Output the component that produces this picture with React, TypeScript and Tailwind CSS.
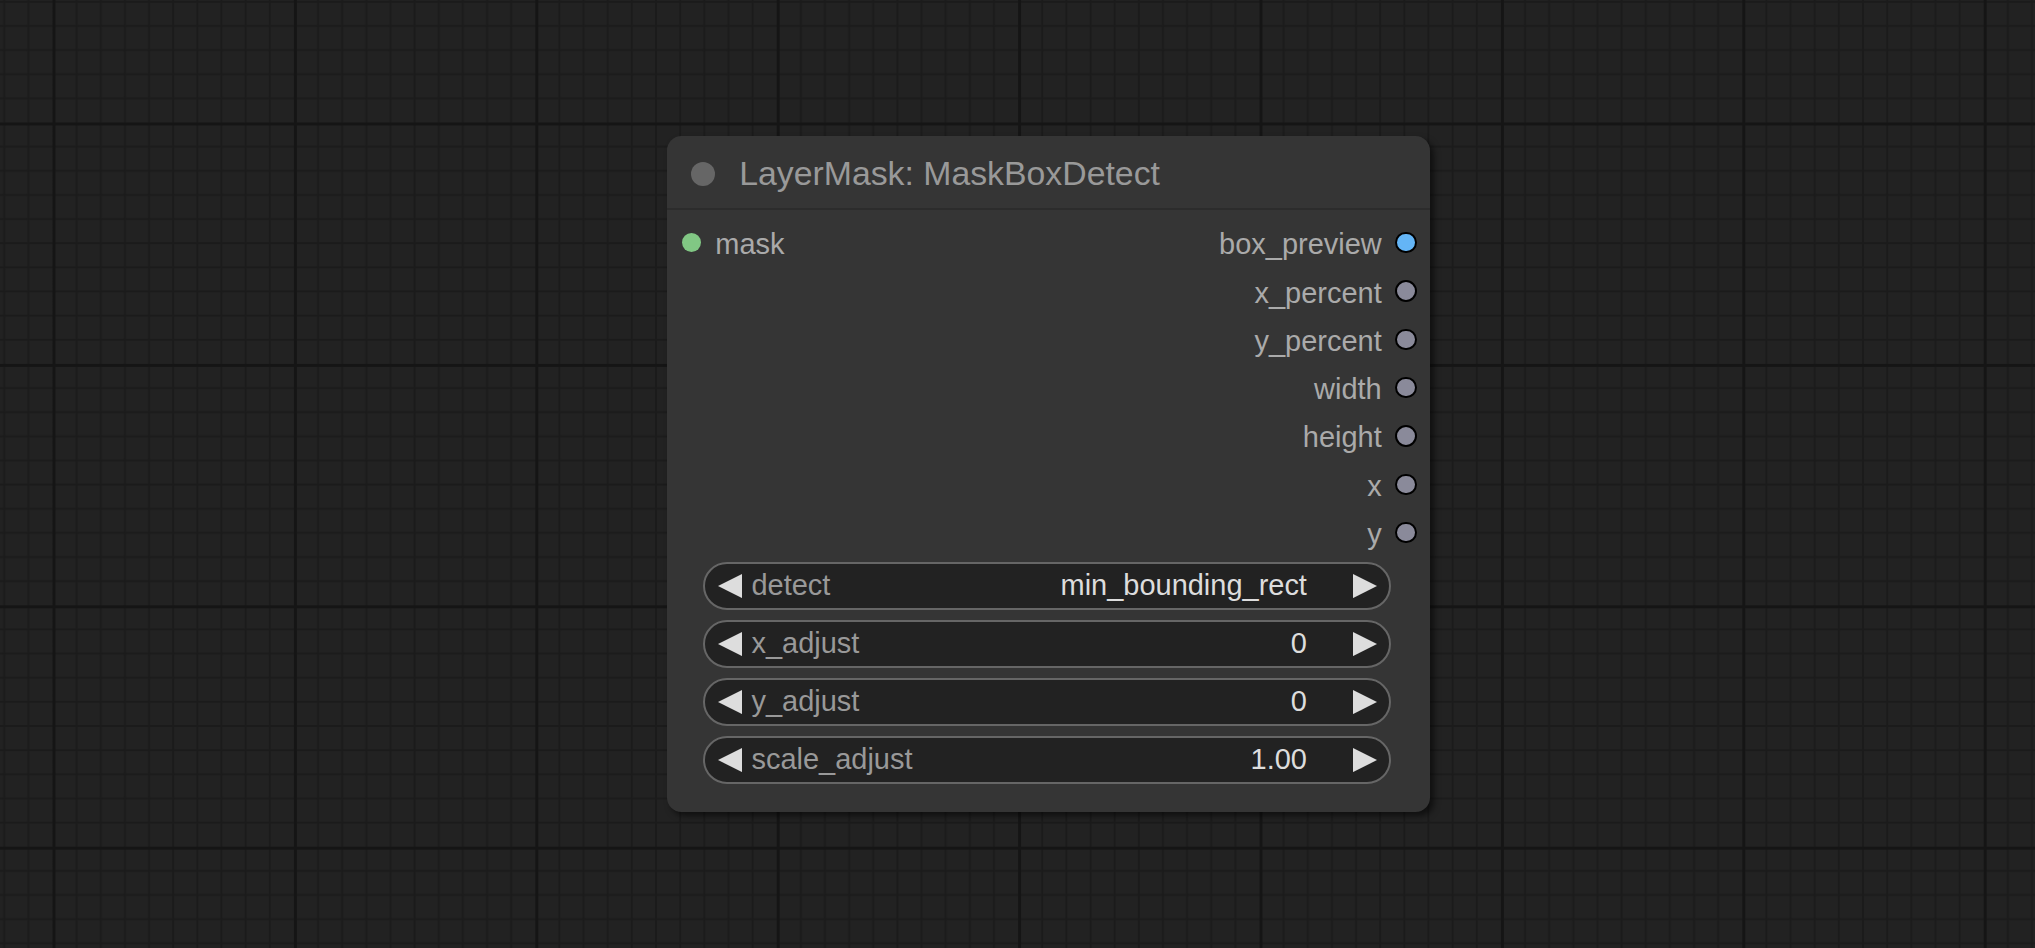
import React from 'react';

// ComfyUI-style canvas with one LayerMask node
const outputs = [
    { name: 'box_preview', color: 'bg-[#64b5f6]' },
    { name: 'x_percent', color: 'bg-[#8a8a9a]' },
    { name: 'y_percent', color: 'bg-[#8a8a9a]' },
    { name: 'width', color: 'bg-[#8a8a9a]' },
    { name: 'height', color: 'bg-[#8a8a9a]' },
    { name: 'x', color: 'bg-[#8a8a9a]' },
    { name: 'y', color: 'bg-[#8a8a9a]' },
];

const widgets = [
    { label: 'detect', value: 'min_bounding_rect' },
    { label: 'x_adjust', value: '0' },
    { label: 'y_adjust', value: '0' },
    { label: 'scale_adjust', value: '1.00' },
];

const minor = [1, 2, 3, 4, 5, 6, 7, 8, 9];

const Grid = () => (
    <svg className="absolute inset-0" width="2035" height="948">
        <defs>
            <pattern id="grid" patternUnits="userSpaceOnUse" x="52.5" y="122.5" width="241.4" height="241.4">
                <rect width="241.4" height="241.4" fill="#222222" />
                {minor.map((k) => (
                    <React.Fragment key={k}>
                        <rect x={k * 24.14 - 1} y="0" width="2" height="241.4" fill="#1b1b1b" />
                        <rect x="0" y={k * 24.14 - 1} width="241.4" height="2" fill="#1b1b1b" />
                    </React.Fragment>
                ))}
                <rect x="0" y="0" width="3" height="241.4" fill="#151515" />
                <rect x="0" y="0" width="241.4" height="3" fill="#151515" />
            </pattern>
        </defs>
        <rect width="2035" height="948" fill="url(#grid)" />
    </svg>
);

const Arrow = ({ dir }: { dir: 'left' | 'right' }) => (
    <svg width="24.1" height="24.1" viewBox="0 0 10 10" className="shrink-0">
        {dir === 'left' ? <polygon points="10,0 0,5 10,10" fill="#dddddd" /> : <polygon points="0,0 10,5 0,10" fill="#dddddd" />}
    </svg>
);

const Widget = ({ label, value }: { label: string; value: string }) => (
    <div className="h-[48.28px] rounded-full border-2 border-[#666666] bg-[#222222] flex items-center pl-[12.5px] pr-[12.5px] text-[28.97px] leading-none">
        <Arrow dir="left" />
        <span className="ml-[9.7px] flex-1 text-[#999999]">{label}</span>
        <span className="mr-[45.9px] text-[#dddddd]">{value}</span>
        <Arrow dir="right" />
    </div>
);

const Node = () => (
    <div className="absolute left-[667px] top-[136px] w-[763px] h-[676px] rounded-[14.5px] bg-[#353535] shadow-[4px_4px_6px_rgba(0,0,0,0.55)] font-['Liberation_Sans',Arial,sans-serif]">
        {/* title */}
        <div className="h-[74px] pt-[3px] flex items-center pl-[24.2px] border-b-2 border-[#2c2c2c]">
            <div className="w-[24px] h-[24px] rounded-full bg-[#666666] shrink-0" />
            <span className="ml-[24px] text-[33.8px] leading-none text-[#999999]">LayerMask: MaskBoxDetect</span>
        </div>

        {/* slots */}
        <div className="pt-[8.7px] text-[28.97px] leading-none text-[#aaaaaa]">
            {outputs.map((o, i) => (
                <div key={o.name} className="h-[48.28px] flex items-center px-[14.5px]">
                    {i === 0 && (
                        <>
                            <div className="w-[19.3px] h-[19.3px] rounded-full bg-[#81c784] shrink-0" />
                            <span className="ml-[14.5px] pt-[4px]">mask</span>
                        </>
                    )}
                    <span className="ml-auto pt-[4px]">{o.name}</span>
                    <div className={`ml-[13.5px] -mr-[1px] w-[21.3px] h-[21.3px] rounded-full border-2 border-black shrink-0 ${o.color}`} />
                </div>
            ))}
        </div>

        {/* widgets */}
        <div className="mt-[5.3px] pl-[36.2px] pr-[38.6px] flex flex-col gap-[9.66px]">
            {widgets.map((w) => (
                <Widget key={w.label} label={w.label} value={w.value} />
            ))}
        </div>
    </div>
);

export default function App() {
    return (
        <div className="relative w-[2035px] h-[948px] overflow-hidden bg-[#222222]">
            <Grid />
            <Node />
        </div>
    );
}
